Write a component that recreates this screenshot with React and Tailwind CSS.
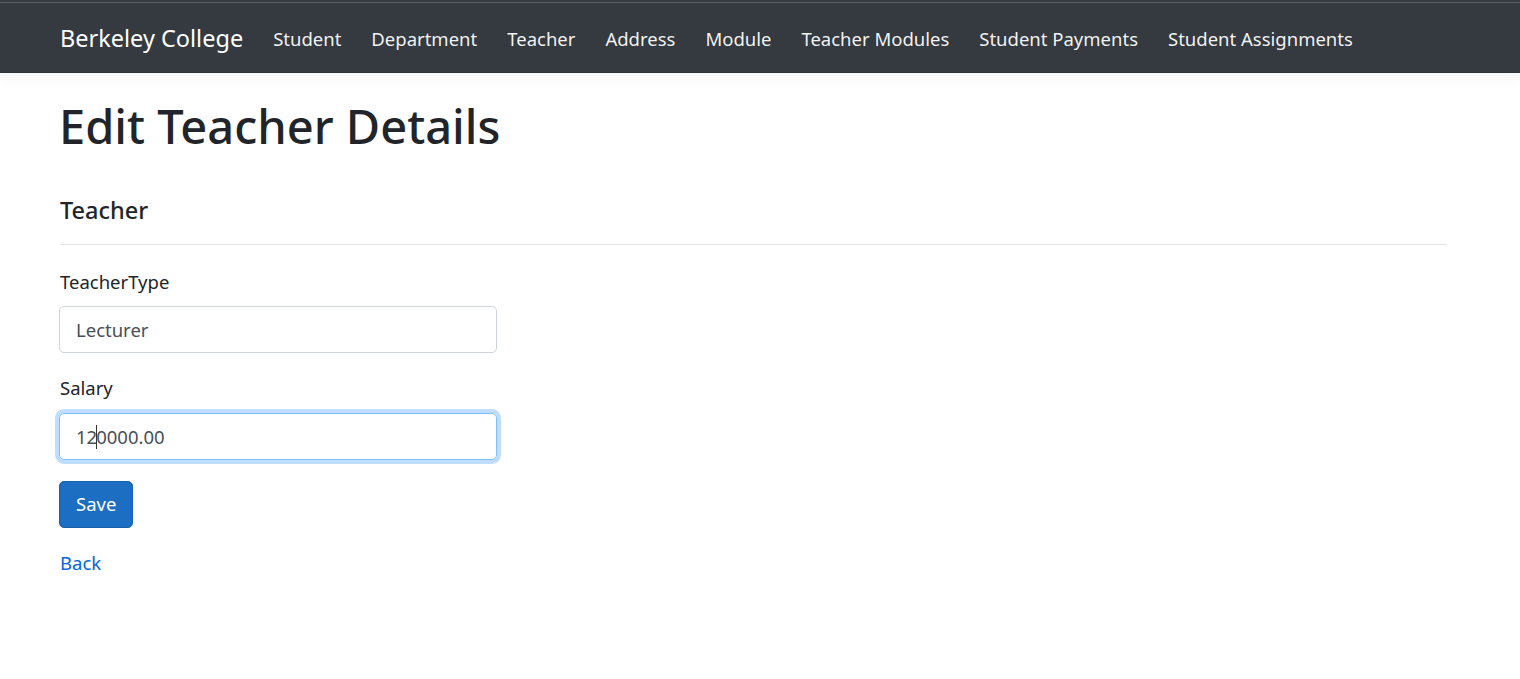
export default function App() {
  const links = ["Student", "Department", "Teacher", "Address", "Module", "Teacher Modules", "Student Payments", "Student Assignments"];
  return (
    <div className="min-h-[679px] bg-white text-[#212529]" style={{ fontFamily: '"Noto Sans", "Open Sans", sans-serif' }}>
      <header className="bg-[#343a40] shadow-[0_5px_15px_rgba(0,0,0,0.05)] border-b border-[#2f3439]">
        <div className="h-[2px]" />
        <div className="h-[1px] bg-[#5c6065]" />
        <nav className="h-[69px] flex items-center pl-[60px] pt-[3px]">
          <span className="text-white text-[23.5px] leading-none mr-[15px] pb-[1px]">Berkeley College</span>
          <ul className="flex items-center">
            {links.map((l) => (
              <li key={l} className="px-[15px] text-[18.5px] text-white/95 leading-none">{l}</li>
            ))}
          </ul>
        </nav>
      </header>
      <main className="pl-[59px] w-[1447px]">
        <h1 className="text-[47px] font-medium leading-[60px] mt-[23px]">Edit Teacher Details</h1>
        <h4 className="text-[23.5px] font-medium leading-[30px] mt-[39px] ml-[1px]">Teacher</h4>
        <hr className="mt-[19px] border-t border-[#e4e4e4] ml-[1px]" />
        <div className="mt-[22px] w-[438px]">
          <label className="block text-[18.5px] leading-[30px] ml-[1px]">TeacherType</label>
          <div className="mt-[9px] h-[47px] border border-[#ced4da] rounded-[5px] px-[16px] flex items-center text-[18.5px] text-[#495057]">Lecturer</div>
          <label className="block mt-[20px] text-[18.5px] leading-[30px] ml-[1px]">Salary</label>
          <div className="mt-[10px] h-[47px] border border-[#80bdff] rounded-[5px] px-[16px] flex items-center text-[18.5px] text-[#495057] shadow-[0_0_0_4px_rgba(0,123,255,0.25)]">
            <span>12</span><span className="inline-block w-px h-[24px] bg-[#333] -mx-px" /><span>0000.00</span>
          </div>
          <button className="mt-[21px] h-[47px] px-[16px] bg-[#1b6ec2] border border-[#1861ac] rounded-[5px] text-white text-[18.5px] leading-none">Save</button>
          <div className="mt-[20px]">
            <a className="text-[18.5px] leading-[30px] text-[#0366d6] ml-[1px]" href="#">Back</a>
          </div>
        </div>
      </main>
    </div>
  );
}
